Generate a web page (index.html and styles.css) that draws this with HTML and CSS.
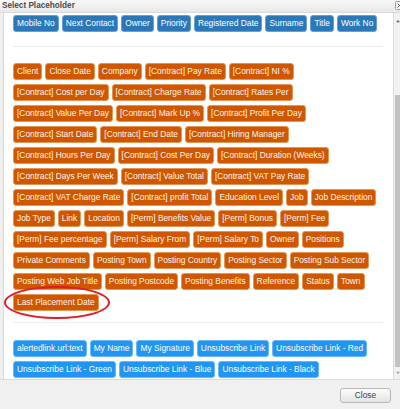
FILE: index.html
```html
<!DOCTYPE html>
<html lang="en">
<head>
<meta charset="utf-8">
<title>Select Placeholder</title>
<link rel="stylesheet" href="styles.css">
</head>
<body>
<div class="dialog">
  <div class="titlebar">
    <span class="title">Select Placeholder</span>
    <span class="xbtn"><svg width="9" height="9" viewBox="0 0 9 9"><rect x="0.5" y="0.5" width="8" height="8" rx="1" fill="#f6f6f6" stroke="#9a9a9a"/><path d="M2.5 2.5l4 4M6.5 2.5l-4 4" stroke="#555" stroke-width="1"/></svg></span>
  </div>
  <div class="main">
    <div class="pane">
      <div class="tags">
        <span class="tag tag-primary">Mobile No</span>
        <span class="tag tag-primary">Next Contact</span>
        <span class="tag tag-primary">Owner</span>
        <span class="tag tag-primary">Priority</span>
        <span class="tag tag-primary">Registered Date</span>
        <span class="tag tag-primary">Surname</span>
        <span class="tag tag-primary">Title</span>
        <span class="tag tag-primary">Work No</span>
      </div>
      <hr class="sep sep-top">
      <div class="tags">
        <span class="tag tag-orange">Client</span>
        <span class="tag tag-orange">Close Date</span>
        <span class="tag tag-orange">Company</span>
        <span class="tag tag-orange">[Contract] Pay Rate</span>
        <span class="tag tag-orange">[Contract] NI %</span>
        <span class="tag tag-orange">[Contract] Cost per Day</span>
        <span class="tag tag-orange">[Contract] Charge Rate</span>
        <span class="tag tag-orange">[Contract] Rates Per</span>
        <span class="tag tag-orange">[Contract] Value Per Day</span>
        <span class="tag tag-orange">[Contract] Mark Up %</span>
        <span class="tag tag-orange">[Contract] Profit Per Day</span>
        <span class="tag tag-orange">[Contract] Start Date</span>
        <span class="tag tag-orange">[Contract] End Date</span>
        <span class="tag tag-orange">[Contract] Hiring Manager</span>
        <span class="tag tag-orange">[Contract] Hours Per Day</span>
        <span class="tag tag-orange">[Contract] Cost Per Day</span>
        <span class="tag tag-orange">[Contract] Duration (Weeks)</span>
        <span class="tag tag-orange">[Contract] Days Per Week</span>
        <span class="tag tag-orange">[Contract] Value Total</span>
        <span class="tag tag-orange">[Contract] VAT Pay Rate</span>
        <span class="tag tag-orange">[Contract] VAT Charge Rate</span>
        <span class="tag tag-orange">[Contract] profit Total</span>
        <span class="tag tag-orange">Education Level</span>
        <span class="tag tag-orange">Job</span>
        <span class="tag tag-orange">Job Description</span>
        <span class="tag tag-orange">Job Type</span>
        <span class="tag tag-orange">Link</span>
        <span class="tag tag-orange">Location</span>
        <span class="tag tag-orange">[Perm] Benefits Value</span>
        <span class="tag tag-orange">[Perm] Bonus</span>
        <span class="tag tag-orange">[Perm] Fee</span>
        <span class="tag tag-orange">[Perm] Fee percentage</span>
        <span class="tag tag-orange">[Perm] Salary From</span>
        <span class="tag tag-orange">[Perm] Salary To</span>
        <span class="tag tag-orange">Owner</span>
        <span class="tag tag-orange">Positions</span>
        <span class="tag tag-orange">Private Comments</span>
        <span class="tag tag-orange">Posting Town</span>
        <span class="tag tag-orange">Posting Country</span>
        <span class="tag tag-orange">Posting Sector</span>
        <span class="tag tag-orange">Posting Sub Sector</span>
        <span class="tag tag-orange">Posting Web Job Title</span>
        <span class="tag tag-orange">Posting Postcode</span>
        <span class="tag tag-orange">Posting Benefits</span>
        <span class="tag tag-orange">Reference</span>
        <span class="tag tag-orange">Status</span>
        <span class="tag tag-orange">Town</span>
        <span class="tag tag-orange tag-marked">Last Placement Date<span class="ring"></span></span>
      </div>
      <hr class="sep sep-bottom">
      <div class="tags">
        <span class="tag tag-blue">alertedlink.url:text</span>
        <span class="tag tag-blue">My Name</span>
        <span class="tag tag-blue">My Signature</span>
        <span class="tag tag-blue">Unsubscribe Link</span>
        <span class="tag tag-blue">Unsubscribe Link - Red</span>
        <span class="tag tag-blue">Unsubscribe Link - Green</span>
        <span class="tag tag-blue">Unsubscribe Link - Blue</span>
        <span class="tag tag-blue">Unsubscribe Link - Black</span>
      </div>
    </div>
    <div class="scrollbar">
      <div class="sb-up"><svg width="6" height="4" viewBox="0 0 6 4"><path d="M0 4L3 0.5 6 4z" fill="#606060"/></svg></div>
      <div class="sb-track"><div class="sb-thumb"></div></div>
      <div class="sb-down"><svg width="6" height="4" viewBox="0 0 6 4"><path d="M0 0L3 3.5 6 0z" fill="#a0a0a0"/></svg></div>
    </div>
  </div>
  <div class="footer">
    <button class="close-btn" type="button">Close</button>
  </div>
</div>
</body>
</html>
```

FILE: styles.css
```css
* { box-sizing: border-box; }
html, body { margin: 0; padding: 0; }
body {
  width: 400px;
  height: 409px;
  overflow: hidden;
  background: #f0f0f0;
  font-family: "Liberation Sans", Arial, sans-serif;
}
.dialog {
  display: flex;
  flex-direction: column;
  height: 409px;
}
.titlebar {
  flex: none;
  height: 13px;
  display: flex;
  justify-content: space-between;
  align-items: flex-start;
  padding-left: 2px;
  background: linear-gradient(#f8f8f8, #e8e8e8);
  border-bottom: 1px solid #dadada;
  overflow: hidden;
}
.title {
  font-size: 8.2px;
  font-weight: bold;
  line-height: 12px;
  color: #4a4a4a;
}
.xbtn {
  display: flex;
  margin-top: 1px;
  margin-right: -4px;
}
.main {
  flex: 1;
  min-height: 0;
  display: flex;
  padding-left: 3px;
}
.pane {
  flex: 1;
  min-width: 0;
  background: #fff;
  border-left: 1px solid #dadada;
  padding: 2px 10px 0 9px;
  overflow: hidden;
}
.tags {
  display: flex;
  flex-wrap: wrap;
  gap: 4px 3px;
}
.tag {
  position: relative;
  display: block;
  height: 17px;
  line-height: 15px;
  padding: 0 3px;
  border: 1px solid;
  border-radius: 3px;
  font-size: 8.4px;
  color: #fff;
  white-space: nowrap;
}
.tag-primary {
  background: #2a78b7;
  border-color: #6a9fcf;
}
.tag-orange {
  background: #cf5700;
  border-color: #e49656;
  color: #fff6ee;
}
.tag-blue {
  background: #2195f2;
  border-color: #6cb8f6;
}
.ring {
  position: absolute;
  left: -10px;
  right: -12px;
  top: -9px;
  bottom: -9px;
  border: 2.5px solid #e21b24;
  border-radius: 50%;
  pointer-events: none;
}
.sep {
  height: 1px;
  border: 0;
  background: #ececec;
}
.sep-top { margin: 14px 0 16px; }
.sep-bottom { margin: 11px 0 17px; }
.scrollbar {
  flex: none;
  width: 7px;
  display: flex;
  flex-direction: column;
  background: #f1f1f1;
  border-left: 1px solid #dcdcdc;
}
.sb-up {
  flex: none;
  height: 16px;
  display: flex;
  align-items: center;
  padding-left: 2px;
}
.sb-track {
  flex: 1;
  display: flex;
  flex-direction: column;
  justify-content: flex-end;
}
.sb-thumb {
  height: 272px;
  margin-left: 1px;
  background: #c1c1c1;
}
.sb-down {
  flex: none;
  height: 12px;
  display: flex;
  align-items: center;
  padding-left: 2px;
}
.footer {
  flex: none;
  height: 30px;
  display: flex;
  justify-content: flex-end;
  align-items: flex-start;
  padding: 8px 9px 0 0;
  background: #f0f0f0;
  border-top: 1px solid #dadada;
}
.close-btn {
  width: 51px;
  height: 15px;
  padding: 0;
  font-family: "Liberation Sans", Arial, sans-serif;
  font-size: 8.4px;
  line-height: 13px;
  color: #444;
  background: linear-gradient(#fdfdfd, #e3e3e3);
  border: 1px solid #b8b8b8;
  border-radius: 3px;
}
```
